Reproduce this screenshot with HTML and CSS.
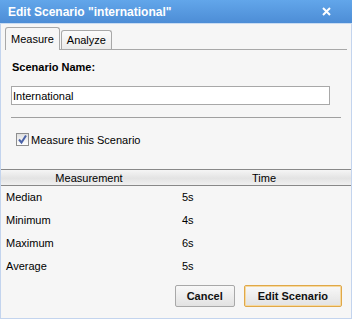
FILE: index.html
```html
<!DOCTYPE html>
<html>
<head>
<meta charset="utf-8">
<link rel="stylesheet" href="styles.css">
</head>
<body>
<div class="dialog">
  <div class="titlebar">
    <span class="title">Edit Scenario "international"</span>
    <svg class="close" width="9" height="9" viewBox="0 0 9 9"><path d="M1 1 L8 8 M8 1 L1 8" stroke="#fff" stroke-width="2"/></svg>
  </div>
  <div class="body">
    <div class="tabs">
      <div class="tab active">Measure</div>
      <div class="tab">Analyze</div>
    </div>
    <div class="form">
      <div class="label">Scenario Name:</div>
      <input class="input" type="text" value="International">
      <div class="rule"></div>
      <label class="check"><span class="box"><svg width="11" height="11" viewBox="0 0 11 11"><path d="M2 5.5 L4.5 8.5 L9 1.5" fill="none" stroke="#4a62a8" stroke-width="2"/></svg></span>Measure this Scenario</label>
    </div>
    <div class="grid">
      <div class="ghead">
        <div class="c1">Measurement</div>
        <div class="c2">Time</div>
      </div>
      <div class="row"><div class="c1">Median</div><div class="c2">5s</div></div>
      <div class="row"><div class="c1">Minimum</div><div class="c2">4s</div></div>
      <div class="row"><div class="c1">Maximum</div><div class="c2">6s</div></div>
      <div class="row"><div class="c1">Average</div><div class="c2">5s</div></div>
    </div>
    <div class="buttons">
      <button class="btn">Cancel</button>
      <button class="btn primary">Edit Scenario</button>
    </div>
  </div>
</div>
</body>
</html>
```

FILE: styles.css
```css
html, body {
  margin: 0;
  padding: 0;
  background: #f5f5f5;
}
body {
  font-family: "Liberation Sans", Arial, sans-serif;
  font-size: 11px;
  color: #000;
}
.dialog {
  width: 352px;
  height: 319px;
  box-sizing: border-box;
  border: 1px solid #c3d4ee;
  border-top: none;
  background: #f6f6f6;
  display: flex;
  flex-direction: column;
}
.titlebar {
  height: 23px;
  margin: 0 -1px;
  background: linear-gradient(#62a6ea, #4d8dd6);
  display: flex;
  align-items: center;
  padding: 0 8px;
  justify-content: space-between;
  border-bottom: 1px solid #c9dcf2;
}
.title {
  color: #fff;
  font-weight: bold;
  font-size: 12px;
}
.close { margin-right: 13px; }
.body {
  flex: 1;
  display: flex;
  flex-direction: column;
}
.tabs {
  display: flex;
  margin: 3px 4px 0 4px;
  border-bottom: 1px solid #a8a8a8;
  height: 22px;
  align-items: flex-end;
}
.tab {
  height: 19px;
  box-sizing: border-box;
  border: 1px solid #a8a8a8;
  border-bottom: none;
  border-radius: 3px 3px 0 0;
  background: linear-gradient(#fbfbfb, #ebebeb);
  padding: 3px 5px 0 5px;
  margin-right: 1px;
  color: #000;
}
.tab.active {
  height: 23px;
  padding-top: 5px;
  padding-left: 5px;
  padding-right: 5px;
  background: #f6f6f6;
  margin-bottom: -1px;
}
.form {
  padding: 11px 10px 0 10px;
}
.label {
  font-weight: bold;
  margin-left: 1px;
  height: 13px;
  font-size: 11px;
}
.input {
  display: block;
  margin-top: 12px;
  width: 319px;
  height: 19px;
  box-sizing: border-box;
  border: 1px solid #a8a8a8;
  background: #fff;
  font: 11px "Liberation Sans", Arial, sans-serif;
  padding: 0 1px;
  outline: none;
}
.rule {
  margin-top: 12px;
  width: 330px;
  height: 1px;
  background: #a0a0a0;
}
.check {
  display: flex;
  align-items: center;
  margin: 15px 0 0 5px;
  gap: 2px;
}
.box {
  width: 11px;
  height: 11px;
  border: 1px solid #8e8e8e;
  background: linear-gradient(#e0e0e0, #fff);
  display: flex;
}
.grid {
  margin-top: 23px;
}
.ghead {
  display: flex;
  height: 15px;
  border-top: 1px solid #888;
  border-bottom: 1px solid #888;
  background: linear-gradient(#f5f5f5, #e3e3e3 55%, #f0f0f0);
  align-items: center;
}
.ghead .c1 { width: 176px; text-align: center; }
.ghead .c2 { flex: 1; text-align: center; }
.row {
  display: flex;
  height: 23px;
  align-items: center;
  padding-bottom: 2px;
  box-sizing: border-box;
}
.row .c1 { width: 176px; padding-left: 5px; box-sizing: border-box; }
.row .c2 { padding-left: 5px; }
.buttons {
  display: flex;
  justify-content: flex-end;
  gap: 9px;
  padding: 0 9px 0 0;
  margin-top: 7px;
}
.btn {
  height: 22px;
  box-sizing: border-box;
  border: 1px solid #a8a8a8;
  border-radius: 2px;
  background: linear-gradient(#f8f8f8, #e2e2e2);
  font: bold 11px "Liberation Sans", Arial, sans-serif;
  padding: 0 11px;
  color: #111;
}
.btn.primary {
  border: 1px solid #e0a848;
  box-shadow: inset 0 0 0 1px #f6d9a0;
  padding: 0 13px;
}
```
